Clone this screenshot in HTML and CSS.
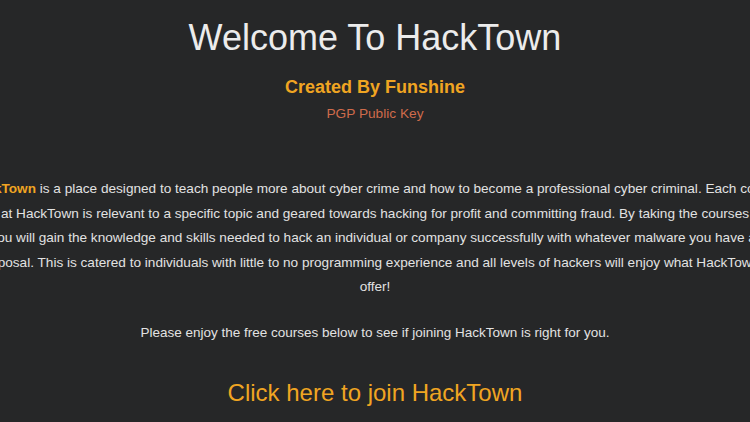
FILE: index.html
```html
<!DOCTYPE html>
<html lang="en">
<head>
<meta charset="utf-8">
<title>HackTown</title>
<link rel="stylesheet" href="styles.css">
</head>
<body>
<main class="page">
  <h1 class="title">Welcome To HackTown</h1>
  <h2 class="author">Created By Funshine</h2>
  <a class="pgp" href="#">PGP Public Key</a>
  <div class="intro-wrap">
    <p class="intro">
      <span class="line"><span class="brand">HackTown</span> is a place designed to teach people more about cyber crime and how to become a professional cyber criminal. Each course</span>
      <span class="line">at HackTown is relevant to a specific topic and geared towards hacking for profit and committing fraud. By taking the courses</span>
      <span class="line">you will gain the knowledge and skills needed to hack an individual or company successfully with whatever malware you have at</span>
      <span class="line">your disposal. This is catered to individuals with little to no programming experience and all levels of hackers will enjoy what HackTown has to</span>
      <span class="line">offer!</span>
    </p>
  </div>
  <p class="enjoy">Please enjoy the free courses below to see if joining HackTown is right for you.</p>
  <a class="join" href="#">Click here to join HackTown</a>
</main>
</body>
</html>
```
FILE: styles.css
```css
html, body {
  margin: 0;
  padding: 0;
  background: #262728;
  overflow: hidden;
}
body {
  font-family: "Liberation Sans", Arial, sans-serif;
  color: #e4e4e4;
  width: 750px;
  height: 422px;
}
.page {
  display: flex;
  flex-direction: column;
  align-items: center;
  padding-top: 18px;
}
.title {
  margin: 0;
  font-size: 36px;
  line-height: 40px;
  font-weight: normal;
  color: #ececec;
}
.author {
  margin: 17px 0 0;
  font-size: 18px;
  line-height: 24px;
  font-weight: bold;
  color: #f0a522;
}
.pgp {
  margin-top: 6px;
  font-size: 13.7px;
  line-height: 18px;
  color: #cf6b4b;
  text-decoration: none;
}
.intro-wrap {
  margin-top: 54px;
  width: 100%;
  display: flex;
  justify-content: center;
}
.intro {
  margin: 0;
  flex: none;
  display: flex;
  flex-direction: column;
  align-items: center;
  font-size: 13.6px;
  line-height: 24.5px;
  color: #e2e2e2;
}
.line {
  white-space: nowrap;
}
.brand {
  color: #f0a522;
  font-weight: bold;
}
.enjoy {
  margin: 21px 0 0;
  font-size: 13.5px;
  line-height: 24px;
  color: #e2e2e2;
}
.join {
  margin-top: 33px;
  font-size: 24px;
  line-height: 30px;
  color: #f0a522;
  text-decoration: none;
}
```
